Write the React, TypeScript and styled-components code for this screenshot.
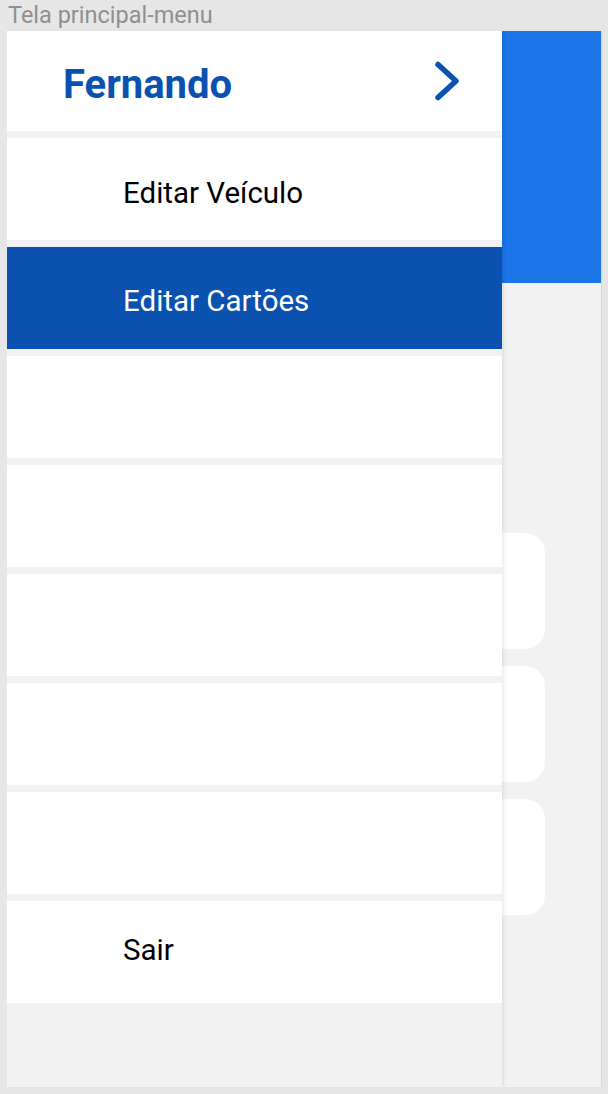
import React from "react";
import styled, { createGlobalStyle } from "styled-components";

const GlobalStyle = createGlobalStyle`
  html, body {
    margin: 0;
    padding: 0;
    background: #e6e6e6;
    font-family: Roboto, "Noto Sans", Arial, sans-serif;
  }
  * { box-sizing: border-box; }
`;

const Page = styled.div`
  width: 608px;
  height: 1094px;
  display: flex;
  flex-direction: column;
  padding: 0 7px 7px 7px;
  background: #e6e6e6;
`;

const Caption = styled.div`
  height: 31px;
  display: flex;
  align-items: center;
  padding-left: 1px;
  padding-top: 1px;
  font-family: Roboto, Arial, sans-serif;
  font-size: 23.5px;
  color: #8f8f8f;
  line-height: 1;
`;

const Frame = styled.div`
  position: relative;
  flex: 1;
  background: #f2f2f2;
  overflow: hidden;
  box-shadow: 1px 0 1px rgba(0, 0, 0, 0.06);
`;

const Screen = styled.div`
  display: flex;
  flex-direction: column;
`;

const Banner = styled.div`
  height: 252px;
  background: #1b74e8;
`;

const CardList = styled.div`
  display: flex;
  flex-direction: column;
  gap: 17px;
  padding: 250px 56px 0 56px;
`;

const Card = styled.div`
  height: 116px;
  background: #ffffff;
  border-radius: 20px;
`;

const Drawer = styled.nav`
  position: absolute;
  top: 0;
  left: 0;
  bottom: 0;
  width: 495px;
  display: flex;
  flex-direction: column;
  gap: 7px;
  background: #f2f2f2;
  box-shadow: 2px 0 3px rgba(0, 0, 0, 0.08);
`;

const Header = styled.div`
  height: 100px;
  flex-shrink: 0;
  display: flex;
  align-items: center;
  justify-content: space-between;
  padding: 6px 40px 0 56px;
  background: #ffffff;
`;

const UserName = styled.span`
  font-family: Roboto, Arial, sans-serif;
  font-weight: 700;
  font-size: 40px;
  color: #0a51b0;
`;

const Chevron = styled.svg`
  width: 30px;
  height: 44px;
  margin-top: -6px;
`;

const Item = styled.div<{ $active?: boolean; $shift: number }>`
  height: 102px;
  flex-shrink: 0;
  display: flex;
  align-items: center;
  padding-left: 116px;
  padding-top: ${(p) => Math.max(p.$shift, 0)}px;
  padding-bottom: ${(p) => Math.max(-p.$shift, 0)}px;
  font-family: Roboto, Arial, sans-serif;
  font-size: 29.5px;
  color: ${(p) => (p.$active ? "#ffffff" : "#000000")};
  background: ${(p) => (p.$active ? "#0a51b0" : "#ffffff")};
`;

const items: { label: string; active?: boolean; shift: number }[] = [
  { label: "Editar Veículo", shift: 8 },
  { label: "Editar Cartões", active: true, shift: 5 },
  { label: "", shift: 0 },
  { label: "", shift: 0 },
  { label: "", shift: 0 },
  { label: "", shift: 0 },
  { label: "", shift: 0 },
  { label: "Sair", shift: -4 },
];

export default function App() {
  return (
    <>
      <GlobalStyle />
      <Page>
        <Caption>Tela principal-menu</Caption>
        <Frame>
          <Screen>
            <Banner />
            <CardList>
              <Card />
              <Card />
              <Card />
            </CardList>
          </Screen>
          <Drawer>
            <Header>
              <UserName>Fernando</UserName>
              <Chevron viewBox="0 0 30 44" fill="none">
                <path
                  d="M6 5.5 L24 22 L6 38.5"
                  stroke="#0a51b0"
                  strokeWidth="5.5"
                  strokeLinecap="round"
                  strokeLinejoin="round"
                />
              </Chevron>
            </Header>
            {items.map((it, i) => (
              <Item key={i} $active={it.active} $shift={it.shift}>
                {it.label}
              </Item>
            ))}
          </Drawer>
        </Frame>
      </Page>
    </>
  );
}
